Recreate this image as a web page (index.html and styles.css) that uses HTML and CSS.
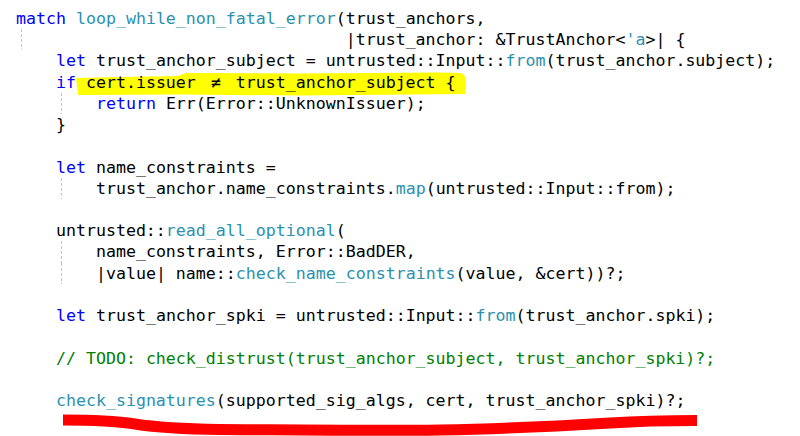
FILE: index.html
```html
<!DOCTYPE html>
<html>
<head>
<meta charset="utf-8">
<link rel="stylesheet" href="styles.css">
</head>
<body>
<div class="editor">
  <svg class="marks" width="800" height="436" viewBox="0 0 800 436" aria-hidden="true">
    <path class="hl" d="M76,78 L120,77 L178,76 L186,73 L300,73.5 L440,72.5 L461,73 Q467,75 466,85 L465,94 L300,95.5 L180,94.5 L78,95 Z"/>
  </svg>
  <div class="code">
    <div class="ln"><span class="kw">match</span> <span class="fn">loop_while_non_fatal_error</span>(trust_anchors,</div>
    <div class="ln"><span class="g">    </span>                             |trust_anchor: &amp;TrustAnchor&lt;<span class="fn">'a</span>&gt;| {</div>
    <div class="ln">    <span class="kw">let</span> trust_anchor_subject = untrusted::Input::<span class="fn">from</span>(trust_anchor.subject);</div>
    <div class="ln">    <span class="kw">if</span> cert.issuer <span class="lig">≠</span> trust_anchor_subject {</div>
    <div class="ln">    <span class="g">    </span><span class="kw">return</span> Err(Error::UnknownIssuer);</div>
    <div class="ln">    }</div>
    <div class="ln"> </div>
    <div class="ln">    <span class="kw">let</span> name_constraints =</div>
    <div class="ln">    <span class="g">    </span>trust_anchor.name_constraints.<span class="fn">map</span>(untrusted::Input::from);</div>
    <div class="ln"> </div>
    <div class="ln">    untrusted::<span class="fn">read_all_optional</span>(</div>
    <div class="ln">    <span class="g">    </span>name_constraints, Error::BadDER,</div>
    <div class="ln">    <span class="g">    </span>|value| name::<span class="fn">check_name_constraints</span>(value, &amp;cert))?;</div>
    <div class="ln"> </div>
    <div class="ln">    <span class="kw">let</span> trust_anchor_spki = untrusted::Input::<span class="fn">from</span>(trust_anchor.spki);</div>
    <div class="ln"> </div>
    <div class="ln">    <span class="cm">// TODO: check_distrust(trust_anchor_subject, trust_anchor_spki)?;</span></div>
    <div class="ln"> </div>
    <div class="ln">    <span class="fn">check_signatures</span>(supported_sig_algs, cert, trust_anchor_spki)?;</div>
    <div class="ln"> </div>
    <div class="ln">    Ok(())</div>
  </div>
  <svg class="marks top" width="800" height="436" viewBox="0 0 800 436" aria-hidden="true">
    <path class="red" d="M63,420 C90,420 115,421 135,424 C160,428 180,429 220,429.5 C300,430 380,431 440,430 C500,429 560,426 610,423 C640,421 670,420.5 697,420.5"/>
  </svg>
</div>
</body>
</html>
```

FILE: styles.css
```css
html, body {
  margin: 0;
  padding: 0;
  background: #ffffff;
}

body {
  width: 800px;
  height: 436px;
  overflow: hidden;
}

.editor {
  position: relative;
  width: 800px;
  height: 436px;
  overflow: hidden;
}

.marks {
  position: absolute;
  left: 0;
  top: 0;
  z-index: 0;
}

.marks.top {
  z-index: 2;
}

.hl {
  fill: #ffff00;
}

.red {
  fill: none;
  stroke: #ff0000;
  stroke-width: 11;
  stroke-linecap: butt;
}

.code {
  position: relative;
  z-index: 1;
  padding: 8px 0 0 16px;
  font-family: "DejaVu Sans Mono", monospace;
  font-size: 16.6px;
  color: #000000;
}

.ln {
  white-space: pre;
  height: 21.23px;
  line-height: 21.23px;
}

.kw {
  color: #0000ff;
}

.fn {
  color: #2b91af;
}

.cm {
  color: #008000;
}

.lig {
  display: inline-block;
  width: 2ch;
  text-align: center;
}

.g {
  display: inline-block;
  height: 21.23px;
  vertical-align: top;
  background-image: repeating-linear-gradient(to bottom, #c4c4c4 0, #c4c4c4 3px, transparent 3px, transparent 5px);
  background-size: 1px 100%;
  background-position: 5px 0;
  background-repeat: no-repeat;
}
```
